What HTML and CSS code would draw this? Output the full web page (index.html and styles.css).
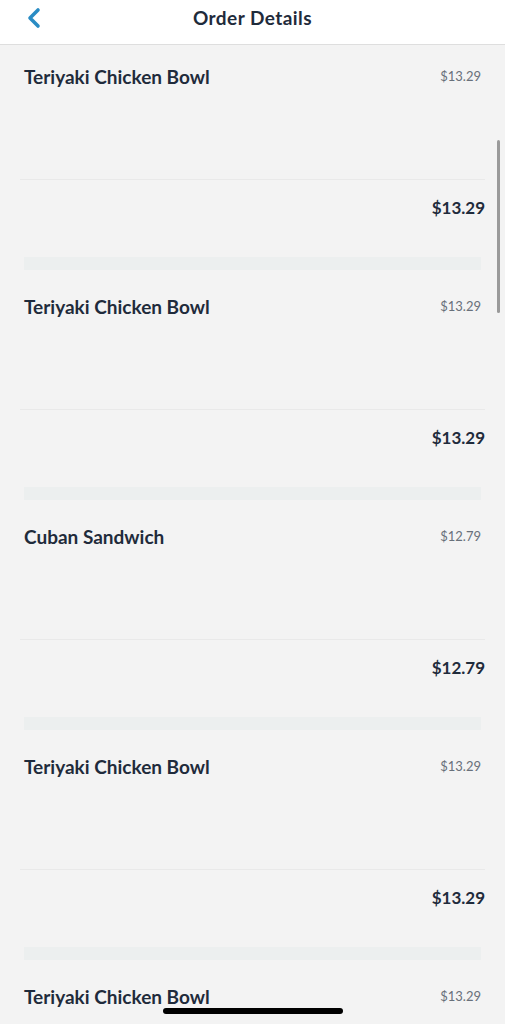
FILE: index.html
```html
<!DOCTYPE html>
<html>
<head>
<meta charset="utf-8">
<link rel="stylesheet" href="styles.css">
</head>
<body>
<div class="screen">
  <header class="header">
    <svg class="back" width="16" height="22" viewBox="0 0 16 22"><path d="M12 3 L4 11 L12 19" fill="none" stroke="#2a8cc4" stroke-width="3.6" stroke-linecap="round" stroke-linejoin="round"/></svg>
    <div class="title">Order Details</div>
  </header>
  <main class="list">
    <section class="item">
      <div class="row"><span class="name">Teriyaki Chicken Bowl</span><span class="price">$13.29</span></div>
      <div class="totals"><span class="total">$13.29</span></div>
      <div class="bar"></div>
    </section>
    <section class="item">
      <div class="row"><span class="name">Teriyaki Chicken Bowl</span><span class="price">$13.29</span></div>
      <div class="totals"><span class="total">$13.29</span></div>
      <div class="bar"></div>
    </section>
    <section class="item">
      <div class="row"><span class="name">Cuban Sandwich</span><span class="price">$12.79</span></div>
      <div class="totals"><span class="total">$12.79</span></div>
      <div class="bar"></div>
    </section>
    <section class="item">
      <div class="row"><span class="name">Teriyaki Chicken Bowl</span><span class="price">$13.29</span></div>
      <div class="totals"><span class="total">$13.29</span></div>
      <div class="bar"></div>
    </section>
    <section class="item">
      <div class="row"><span class="name">Teriyaki Chicken Bowl</span><span class="price">$13.29</span></div>
      <div class="totals"><span class="total">$13.29</span></div>
      <div class="bar"></div>
    </section>
  </main>
  <div class="scrollbar"></div>
  <div class="home"></div>
</div>
</body>
</html>
```
FILE: styles.css
```css
* { box-sizing: border-box; }
html, body { margin: 0; padding: 0; }
body {
  font-family: Lato, "Open Sans", sans-serif;
  background: #f3f3f3;
  color: #1f2b3b;
}
.screen {
  position: relative;
  width: 505px;
  height: 1024px;
  overflow: hidden;
  background: #f3f3f3;
}
.header {
  position: relative;
  height: 45px;
  background: #ffffff;
  border-bottom: 1px solid #dedede;
  display: flex;
  align-items: center;
  justify-content: center;
}
.back {
  position: absolute;
  left: 26px;
  top: 7px;
}
.title {
  font-size: 19px;
  font-weight: 700;
  letter-spacing: 0.45px;
  color: #1f2b3b;
  margin-top: -9px;
}
.list {
  display: flex;
  flex-direction: column;
}
.item {
  display: flex;
  flex-direction: column;
  height: 230px;
  padding-top: 19px;
}
.row {
  display: flex;
  justify-content: space-between;
  align-items: center;
  height: 24px;
  padding: 0 24px;
}
.name {
  font-size: 19px;
  font-weight: 700;
  color: #1f2b3b;
}
.price {
  font-size: 13px;
  font-weight: 400;
  color: #68707a;
}
.totals {
  margin: 91px 20px 0;
  border-top: 1px solid #e9e9e9;
  padding-top: 16px;
  height: 41px;
  display: flex;
  justify-content: flex-end;
  align-items: center;
}
.total {
  font-size: 17px;
  font-weight: 700;
  color: #1f2b3b;
  line-height: 24px;
}
.bar {
  margin: 37px 24px 0;
  height: 13px;
  background: #ecefef;
}
.scrollbar {
  position: absolute;
  left: 497px;
  top: 140px;
  width: 3px;
  height: 173px;
  border-radius: 2px;
  background: #9a9a9a;
}
.home {
  position: absolute;
  left: 163px;
  top: 1008px;
  width: 180px;
  height: 6px;
  border-radius: 3px;
  background: #000;
}
```
